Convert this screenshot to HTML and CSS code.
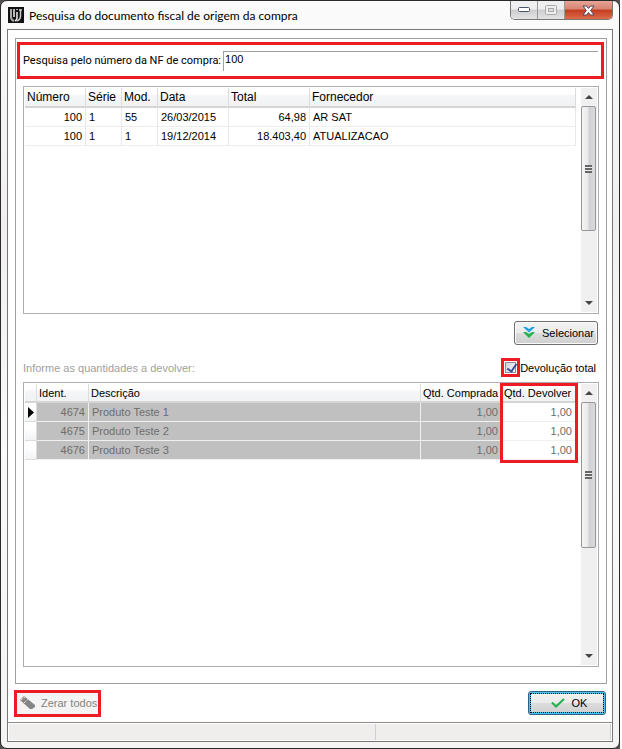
FILE: index.html
```html
<!DOCTYPE html>
<html lang="pt-BR">
<head>
  <meta charset="UTF-8" />
  <meta name="viewport" content="width=device-width, initial-scale=1.0"/>
  <title>Pesquisa do documento fiscal de origem da compra</title>
  <link rel="stylesheet" href="styles.css">
</head>
<body>

<div class="desktop">
<div class="window">

  <!-- Title bar -->
  <header class="titlebar">
    <svg class="app-icon" width="16" height="16" viewBox="0 0 16 16">
      <rect width="16" height="16" fill="#111"/>
      <path d="M3 2v8q0 3 3 4" fill="none" stroke="#aaa" stroke-width="2"/>
      <path d="M6 2v8M9 5v6q0 2-2 3M9 2v1" fill="none" stroke="#eee" stroke-width="1.500"/>
      <path d="M12.500 2v7q0 4-4 5M11 3h3" fill="none" stroke="#ccc" stroke-width="1.500"/>
    </svg>
    <h1>Pesquisa do documento fiscal de origem da compra</h1>
    <div class="window-buttons">
      <button class="win-btn" aria-label="Minimizar">
        <svg width="12" height="6" viewBox="0 0 12 6"><rect x=".5" y=".5" width="11" height="4" rx="1" fill="#fff" stroke="#4a5068"/></svg>
      </button>
      <button class="win-btn" aria-label="Maximizar" disabled>
        <svg width="12" height="10" viewBox="0 0 12 10"><rect x=".5" y=".5" width="11" height="9" rx="1" fill="#eee" stroke="#aaa"/><rect x="3.5" y="3.5" width="5" height="3" fill="#ddd" stroke="#aaa"/></svg>
      </button>
      <button class="win-btn close-btn" aria-label="Fechar">
        <svg width="13" height="11" viewBox="0 0 13 11"><path d="M1 1h3.5l2 2.5L8.500 1H12L8.700 5.500 12 10H8.500l-2-2.500-2 2.500H1l3.300-4.500z" fill="#fff" stroke="#51445a"/></svg>
      </button>
    </div>
  </header>

  <main class="client">
    <section class="panel">
      <div class="search highlight">
        <label for="nf">Pesquisa pelo número da NF de compra:</label>
        <input type="text" id="nf" value="100">
      </div>

      <!-- Notas -->
      <div class="grid notas">
        <div class="grid-body">
          <table>
            <colgroup>
              <col class="w-numero"><col class="w-serie"><col class="w-serie"><col class="w-data"><col class="w-total"><col>
            </colgroup>
            <thead>
              <tr><th>Número</th><th>Série</th><th>Mod.</th><th>Data</th><th>Total</th><th>Fornecedor</th></tr>
            </thead>
            <tbody>
              <tr><td class="num">100</td><td>1</td><td>55</td><td>26/03/2015</td><td class="num">64,98</td><td>AR SAT</td></tr>
              <tr><td class="num">100</td><td>1</td><td>1</td><td>19/12/2014</td><td class="num">18.403,40</td><td>ATUALIZACAO</td></tr>
            </tbody>
          </table>
        </div>
        <div class="scrollbar">
          <button class="arrow up" aria-label="Subir"></button>
          <div class="track"><div class="thumb"><span class="grip"></span></div></div>
          <button class="arrow down" aria-label="Descer"></button>
        </div>
      </div>

      <div class="select-row">
        <button class="btn">
          <svg width="12" height="12" viewBox="0 0 12 12"><path d="M0 0h3l3 2 3-2h3L6 5.500z" fill="#1ba1e6"/><path d="M0 5h3l3 2 3-2h3l-6 6z" fill="#22b14c"/></svg>
          Selecionar
        </button>
      </div>

      <div class="info-row">
        <span class="hint">Informe as quantidades a devolver:</span>
        <span class="check">
          <span class="check-box highlight"><input type="checkbox" id="total" checked></span>
          <label for="total">Devolução total</label>
        </span>
      </div>

      <!-- Produtos -->
      <div class="grid produtos">
        <div class="grid-body">
          <table>
            <colgroup>
              <col class="w-mark"><col class="w-ident"><col><col class="w-comprada"><col class="w-devolver">
            </colgroup>
            <thead>
              <tr><th></th><th>Ident.</th><th>Descrição</th><th>Qtd. Comprada</th><th>Qtd. Devolver</th></tr>
            </thead>
            <tbody>
              <tr><td class="mark"><svg width="6" height="11" viewBox="0 0 6 11"><path d="M0 0l6 5.500L0 11z"/></svg></td><td class="num">4674</td><td>Produto Teste 1</td><td class="num">1,00</td><td class="num edit">1,00</td></tr>
              <tr><td class="mark"></td><td class="num">4675</td><td>Produto Teste 2</td><td class="num">1,00</td><td class="num edit">1,00</td></tr>
              <tr><td class="mark"></td><td class="num">4676</td><td>Produto Teste 3</td><td class="num">1,00</td><td class="num edit">1,00</td></tr>
            </tbody>
          </table>
          <div class="column-mark highlight"></div>
        </div>
        <div class="scrollbar">
          <button class="arrow up" aria-label="Subir"></button>
          <div class="track"><div class="thumb"><span class="grip"></span></div></div>
          <button class="arrow down" aria-label="Descer"></button>
        </div>
      </div>
    </section>

    <div class="actions">
      <button class="clear-btn highlight" disabled>
        <svg width="16" height="14" viewBox="0 0 16 14"><path d="M4 0l11 9v2l-3 2h-2L0 4z" fill="#858585"/><path d="M1 4l4-3M4 7l4-4" stroke="#fff" stroke-dasharray="1 1"/></svg>
        Zerar todos
      </button>
      <button class="btn ok-btn">
        <svg width="14" height="10" viewBox="0 0 14 10"><path d="M1 4.500l4 4L13 1" fill="none" stroke="#22b14c" stroke-width="2"/></svg>
        OK
      </button>
    </div>

    <footer class="statusbar"><span></span><span></span></footer>
  </main>

</div>
</div>

</body>
</html>
```
FILE: styles.css
```css
* {
  box-sizing: border-box;
}
body {
  margin: 0;
  padding-right: 2px;
  background: #fff;
  font-family: "Liberation Sans", Arial, sans-serif;
  font-size: 11px;
  color: #000;
}
button, input {
  font: inherit;
  color: inherit;
}
.desktop {
  background: #55504f;
}
.window {
  display: flex;
  flex-direction: column;
  min-height: 100vh;
  padding: 0 6px 6px;
  border: 1px solid #2a2a2a;
  border-radius: 7px;
  background: linear-gradient(#fbfbfb, #f1efef 30%, #fafafa 60%, #f4f4f4);
}
.highlight {
  border: 3px solid #ed1c24;
}

/* title bar */
.titlebar {
  display: flex;
  align-items: center;
  gap: 5px;
  height: 28px;
  padding-left: 1px;
}
.titlebar h1 {
  flex: 1;
  margin: 0;
  font-family: Lato, "Open Sans", sans-serif;
  font-size: 12px;
  font-weight: normal;
  white-space: nowrap;
}
.window-buttons {
  display: flex;
  align-self: flex-start;
  height: 19px;
  border: 1px solid #777;
  border-top: none;
  border-radius: 0 0 5px 5px;
  overflow: hidden;
}
.win-btn {
  display: flex;
  align-items: center;
  justify-content: center;
  width: 27px;
  padding: 0;
  border: none;
  border-right: 1px solid #999;
  background: linear-gradient(#efefef 45%, #cdcdd0 50%, #e4e4e6);
}
.close-btn {
  width: 47px;
  border-right: none;
  background: linear-gradient(#e5a595, #d98371 45%, #c43c22 50%, #dc6a48);
}

.client {
  flex: 1;
  display: flex;
  flex-direction: column;
  border: 1px solid #777;
  background: #fff;
}
.panel {
  flex: 1;
  display: flex;
  flex-direction: column;
  margin: 8px 5px 0 7px;
  padding: 3px 2px 16px 1px;
  border: 1px solid #a0a0a0;
}
.search {
  display: flex;
  align-items: center;
  gap: 2px;
  height: 37px;
  padding: 0 3px;
}
.search label {
  font-family: Roboto, "Liberation Sans", sans-serif;
}
.search input {
  flex: 1;
  min-width: 0;
  height: 20px;
  padding: 0 0 5px 1px;
  border: 1px solid #a0a0a0;
  border-width: 1px 0 0 1px;
  outline: none;
}

/* grids */
.grid {
  display: flex;
  gap: 5px;
  margin: 0 5px 0 6px;
  padding: 1px;
  border: 1px solid #abadb3;
}
.notas {
  height: 228px;
  margin-top: 7px;
}
.produtos {
  flex: 1;
}
.grid-body {
  position: relative;
  flex: 1;
}
table {
  width: 100%;
  table-layout: fixed;
  border-collapse: separate;
  border-spacing: 0;
}
th, td {
  height: 19px;
  padding: 0 3px;
  border-right: 1px solid #e8e8e8;
  border-bottom: 1px solid #ececec;
  text-align: left;
  white-space: nowrap;
}
th {
  padding: 0 2px;
  border-right-color: #dcdcdc;
  border-bottom: 2px solid #d5d5d5;
  background: linear-gradient(#fff 35%, #f4f6f7 40%, #f1f2f4);
  font-weight: normal;
}
.notas th {
  height: 20px;
  font-size: 12px;
}
.num {
  text-align: right;
}
.w-numero { width: 61px; }
.w-serie { width: 36px; }
.w-data { width: 71px; }
.w-total { width: 81px; }
.w-mark { width: 12px; }
.w-ident { width: 52px; }
.w-comprada { width: 81px; }
.w-devolver { width: 74px; }

.produtos td {
  border-color: #f0f0f0;
  background: #c0c0c0;
  color: #6d6d6d;
}
.produtos td.edit {
  background: #fff;
}
.produtos td.mark {
  border-color: #dcdcdc;
  background: linear-gradient(#fff 35%, #f1f3f5);
}
.mark svg {
  display: block;
}
.column-mark {
  position: absolute;
  top: -1px;
  right: -2px;
  width: 78px;
  height: 80px;
}

/* scrollbar */
.scrollbar {
  display: flex;
  flex-direction: column;
  width: 16px;
  background: #f0f0f0;
}
.arrow {
  display: flex;
  align-items: center;
  justify-content: center;
  height: 18px;
  padding: 0;
  border: none;
  background: none;
}
.arrow::before {
  content: "";
  border: 4px solid transparent;
}
.up::before {
  border-top: none;
  border-bottom-color: #444;
}
.down::before {
  border-bottom: none;
  border-top-color: #444;
}
.track {
  flex: 1;
}
.thumb {
  display: flex;
  align-items: center;
  justify-content: center;
  width: 15px;
  height: 125px;
  border: 1px solid #979797;
  border-radius: 2px;
  background: linear-gradient(to right, #f5f5f5, #e9e9eb 45%, #d0d0d5 55%, #dadadd);
}
.produtos .thumb {
  height: 146px;
}
.grip {
  width: 7px;
  height: 8px;
  background: repeating-linear-gradient(#666 0 2px, #eee 2px 3px);
}

/* buttons and rows */
.btn {
  display: flex;
  align-items: center;
  justify-content: center;
  gap: 7px;
  height: 24px;
  border: 1px solid #707070;
  border-radius: 3px;
  background: linear-gradient(#f2f2f2, #ebebeb 48%, #dcdcdc 52%, #cfcfcf);
  box-shadow: inset 0 0 0 1px #fbfbfb;
}
.select-row {
  display: flex;
  justify-content: flex-end;
  padding: 7px 6px 0 0;
}
.select-row .btn {
  padding: 0 3px 0 8px;
}
.info-row {
  display: flex;
  align-items: center;
  justify-content: space-between;
  height: 37px;
  padding: 8px 8px 0 6px;
}
.hint {
  color: #a0a0a0;
}
.check {
  display: flex;
  align-items: center;
}
.check-box {
  display: flex;
  padding: 1px;
}
.check input {
  appearance: none;
  width: 11px;
  height: 11px;
  margin: 0;
  border: 1px solid #8e8f8f;
  background: linear-gradient(135deg, #cfd4dc, #fafafa);
}
.check input:checked::before {
  content: "";
  display: block;
  width: 4px;
  height: 8px;
  margin: -1px 0 0 3px;
  border: solid #3c4f94;
  border-width: 0 2px 2px 0;
  transform: rotate(35deg);
}
.actions {
  display: flex;
  align-items: center;
  justify-content: space-between;
  height: 38px;
  padding: 0 6px;
}
.clear-btn {
  display: flex;
  align-items: center;
  gap: 5px;
  height: 27px;
  padding: 0 1px 0 3px;
  background: #f4f4f4;
  color: #838383;
}
.ok-btn {
  width: 78px;
  padding: 0 2px 0 6px;
  border-color: #2c628b;
  box-shadow: inset 0 0 0 2px #49c4ee;
  outline: 1px dotted #000;
  outline-offset: -3px;
}
.statusbar {
  display: flex;
  height: 19px;
  padding: 1px;
  border-top: 1px solid #8a8a8a;
}
.statusbar span {
  flex: 235;
  border-right: 1px solid #d0cece;
  background: #f0eded;
}
.statusbar span:first-child {
  flex: 368;
}
```
